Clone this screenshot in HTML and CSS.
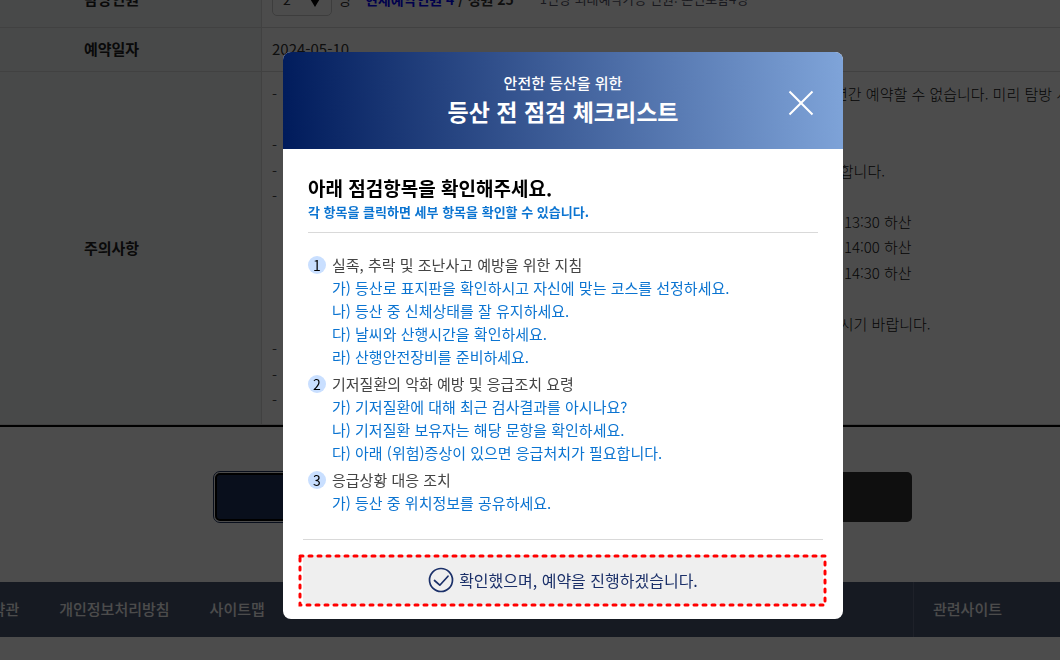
FILE: index.html
```html
<!DOCTYPE html>
<html lang="ko">
<head>
  <meta charset="UTF-8" />
  <meta name="viewport" content="width=device-width, initial-scale=1.0" />
  <title>등산 전 점검 체크리스트</title>
  <link rel="stylesheet" href="styles.css">
</head>
<body>
  <main class="page">
    <table class="info-table">
      <tbody>
        <tr class="row-people">
          <th scope="row"><label for="people">탐방인원</label></th>
          <td>
            <div class="people">
              <div class="select-box">
                <select id="people">
                  <option>1</option>
                  <option selected>2</option>
                  <option>3</option>
                  <option>4</option>
                </select>
                <svg class="arrow" viewBox="0 0 12 10" aria-hidden="true"><path d="M0 0h12L6 10z" /></svg>
              </div>
              <span class="unit">명</span>
              <strong><span class="current">현재예약인원 4</span> / 정원 25</strong>
              <span class="limit">1인당 최대예약가능 인원: 본인포함4명</span>
            </div>
          </td>
        </tr>
        <tr class="row-date">
          <th scope="row">예약일자</th>
          <td>2024-05-10</td>
        </tr>
        <tr class="row-notes">
          <th scope="row">주의사항</th>
          <td>
            <ul class="notes">
              <li><span>-</span><span>1년간 예약할 수 없습니다. 미리 탐방 시</span></li>
              <li></li>
              <li><span>-</span><span>다.</span></li>
              <li><span>-</span><span>능합니다.</span></li>
              <li><span>-</span></li>
              <li><span></span><span>산 13:30 하산</span></li>
              <li><span></span><span>산 14:00 하산</span></li>
              <li><span></span><span>산 14:30 하산</span></li>
              <li></li>
              <li><span></span><span>하시기 바랍니다.</span></li>
              <li><span>-</span></li>
              <li><span>-</span></li>
              <li><span>-</span></li>
            </ul>
          </td>
        </tr>
      </tbody>
    </table>

    <div class="page-buttons">
      <button type="button" class="btn-reserve" aria-label="예약"></button>
      <button type="button" class="btn-cancel" aria-label="취소"></button>
    </div>
  </main>

  <footer class="footer">
    <nav class="footer-nav">
      <a href="#">이용약관</a>
      <a href="#">개인정보처리방침</a>
      <a href="#">사이트맵</a>
    </nav>
    <a href="#" class="related">관련사이트</a>
  </footer>

  <div class="overlay">
    <section class="modal" role="dialog" aria-modal="true" aria-labelledby="modalTitle">
      <header class="modal-header">
        <p>안전한 등산을 위한</p>
        <h1 id="modalTitle">등산 전 점검 체크리스트</h1>
        <button type="button" class="close-btn" aria-label="닫기">
          <svg viewBox="0 0 26 26" aria-hidden="true"><path d="M1.5 1.5l23 23M24.5 1.5l-23 23" /></svg>
        </button>
      </header>

      <div class="modal-body">
        <div class="intro">
          <h2>아래 점검항목을 확인해주세요.</h2>
          <p>각 항목을 클릭하면 세부 항목을 확인할 수 있습니다.</p>
        </div>
        <ol class="checklist">
          <li>
            <span class="num">1</span>
            <div>
              <p>실족, 추락 및 조난사고 예방을 위한 지침</p>
              <a href="#">가) 등산로 표지판을 확인하시고 자신에 맞는 코스를 선정하세요.</a>
              <a href="#">나) 등산 중 신체상태를 잘 유지하세요.</a>
              <a href="#">다) 날씨와 산행시간을 확인하세요.</a>
              <a href="#">라) 산행안전장비를 준비하세요.</a>
            </div>
          </li>
          <li>
            <span class="num">2</span>
            <div>
              <p>기저질환의 악화 예방 및 응급조치 요령</p>
              <a href="#">가) 기저질환에 대해 최근 검사결과를 아시나요?</a>
              <a href="#">나) 기저질환 보유자는 해당 문항을 확인하세요.</a>
              <a href="#">다) 아래 (위험)증상이 있으면 응급처치가 필요합니다.</a>
            </div>
          </li>
          <li>
            <span class="num">3</span>
            <div>
              <p>응급상황 대응 조치</p>
              <a href="#">가) 등산 중 위치정보를 공유하세요.</a>
            </div>
          </li>
        </ol>
      </div>

      <div class="modal-footer">
        <div class="highlight">
          <button type="button" class="confirm-btn">
            <svg viewBox="0 0 26 26" aria-hidden="true">
              <circle cx="13" cy="13" r="11.5" />
              <path d="M6.5 13.5l5.3 4.7 8.2-9" />
            </svg>
            확인했으며, 예약을 진행하겠습니다.
          </button>
          <div class="frame">
            <svg aria-hidden="true"><rect width="100%" height="100%" /></svg>
          </div>
        </div>
      </div>
    </section>
  </div>
</body>
</html>
```

FILE: styles.css
```css
* {
  box-sizing: border-box;
  margin: 0;
  padding: 0;
}
body {
  font-family: "Noto Sans CJK KR", sans-serif;
  font-size: 15px;
  color: #333;
  background: #fff;
  overflow: hidden;
}
a {
  color: inherit;
  text-decoration: none;
}
button, select {
  font: inherit;
  border: none;
  cursor: pointer;
}
ul, ol {
  list-style: none;
}

/* reservation table */
.page {
  margin-top: -28px;
}
.info-table {
  width: 100%;
  table-layout: fixed;
  border-collapse: separate;
  border-spacing: 0;
  border-bottom: 2px solid #000;
}
.info-table th {
  width: 262px;
  padding: 0 38px 2px 0;
  background: #f1f3f5;
  border-right: 1px solid #d9d9d9;
  border-bottom: 1px solid #d9d9d9;
  color: #222;
}
.info-table td {
  padding: 0 0 2px 10px;
  border-bottom: 1px solid #d9d9d9;
  white-space: nowrap;
  overflow: hidden;
}
.row-people {
  height: 56px;
}
.row-date {
  height: 44px;
}
.row-notes {
  height: 353px;
}
.people {
  display: flex;
  align-items: center;
  font-size: 14px;
}
.select-box {
  position: relative;
  width: 60px;
}
.select-box select {
  appearance: none;
  width: 100%;
  height: 34px;
  padding-left: 10px;
  color: #333;
  background: #fff;
  border: 1px solid #ccc;
  border-radius: 5px;
}
.select-box .arrow {
  position: absolute;
  right: 11px;
  top: 15px;
  width: 12px;
  height: 10px;
  fill: #000;
  pointer-events: none;
}
.unit {
  margin: 0 14px 0 6px;
}
.current {
  color: #00f;
}
.limit {
  margin-left: 26px;
  font-size: 13px;
  color: #556;
}
.notes {
  line-height: 1.7;
  font-weight: 300;
  color: #111;
}
.notes li {
  display: grid;
  grid-template-columns: 554px auto;
  min-height: 1.7em;
}
.page-buttons {
  display: flex;
  gap: 6px;
  width: 698px;
  margin: 45px auto 60px;
  position: relative;
  left: 33px;
}
.page-buttons button {
  flex: 1;
  height: 50px;
  border-radius: 5px;
}
.page-buttons .btn-reserve {
  background: #213560;
  border: 2px solid #000;
  outline: 1px solid #213560;
  outline-offset: 1px;
  height: 48px;
  margin: 1px;
}
.page-buttons .btn-cancel {
  background: #333;
}

/* footer */
.footer {
  display: flex;
  justify-content: space-between;
  height: 55px;
  line-height: 53px;
  background: #4a5772;
  color: #fff;
  font-weight: 500;
}
.footer-nav {
  display: flex;
  gap: 40px;
  margin-left: -36px;
}
.related {
  width: 147px;
  padding-left: 19px;
  border-left: 1px solid #66718a;
}

/* modal */
.overlay {
  position: fixed;
  inset: 0;
  display: flex;
  justify-content: center;
  align-items: flex-start;
  padding: 52px 0 0 66px;
  background: rgba(0, 0, 0, 0.7);
}
.modal {
  width: 100%;
  max-width: 560px;
  background: #fff;
  border-radius: 8px;
  overflow: hidden;
}
.modal-header {
  position: relative;
  padding: 19px 0 22px;
  text-align: center;
  color: #fff;
  background: linear-gradient(86deg, #001b5b, #7fa4d9);
}
.modal-header p {
  line-height: 24px;
  font-weight: 500;
}
.modal-header h1 {
  font-size: 23px;
  line-height: 32px;
  font-weight: 700;
}
.close-btn {
  position: absolute;
  top: 38px;
  right: 29px;
  width: 26px;
  height: 26px;
  background: none;
}
.close-btn svg {
  display: block;
  stroke: #fff;
  stroke-width: 2;
}
.modal-body {
  padding: 25px 25px;
}
.intro {
  padding-bottom: 10px;
  border-bottom: 1px solid #d9d9d9;
}
.intro h2 {
  font-size: 19px;
  line-height: 28px;
  font-weight: 700;
  color: #000;
}
.intro p {
  font-size: 13px;
  line-height: 20px;
  font-weight: 700;
  color: #0b74d1;
}
.checklist {
  margin-top: 20px;
  line-height: 23px;
}
.checklist li {
  display: flex;
  gap: 6px;
}
.checklist li + li {
  margin-top: 4px;
}
.checklist p {
  color: #444;
}
.checklist a {
  display: block;
  color: #0b74d1;
}
.num {
  flex: none;
  width: 18px;
  height: 18px;
  margin-top: 3px;
  border-radius: 50%;
  background: #c9dfff;
  color: #000;
  font-size: 14px;
  line-height: 18px;
  text-align: center;
}
.modal-footer {
  margin: 0 20px;
  padding: 15px 0 14px;
  border-top: 1px solid #d9d9d9;
}
.highlight {
  position: relative;
}
.frame {
  position: absolute;
  inset: 1px -2px 0 -3px;
  pointer-events: none;
}
.frame svg {
  display: block;
  width: 100%;
  height: 100%;
  overflow: visible;
  fill: none;
  stroke: #f00;
  stroke-width: 3;
  stroke-linecap: round;
  stroke-dasharray: 3 6;
}
.confirm-btn {
  display: flex;
  justify-content: center;
  align-items: center;
  gap: 5px;
  width: 100%;
  height: 50px;
  border-radius: 5px;
  background: #efefef;
  color: #1b3069;
  font-size: 16px;
}
.confirm-btn svg {
  width: 26px;
  height: 26px;
  fill: none;
  stroke: #1b3069;
  stroke-width: 1.7;
  stroke-linecap: round;
  stroke-linejoin: round;
}
```
